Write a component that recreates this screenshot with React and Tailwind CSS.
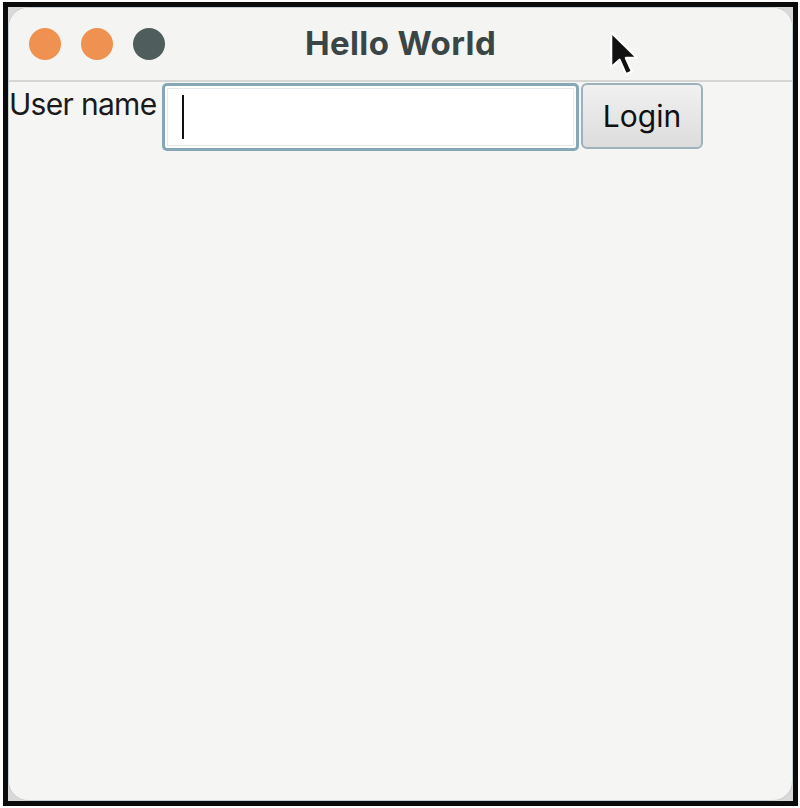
import React from 'react';

function Cursor() {
  return (
    <svg width="40" height="52" viewBox="0 0 17 23" className="absolute left-[599px] top-[22px]">
      <path d="M1.5 1.5 L1.5 17 L5.2 13.6 L8 20 L10.7 18.8 L8 12.8 L13 12.8 Z" fill="#111" stroke="#fff" strokeWidth="1" strokeLinejoin="round" />
    </svg>
  );
}

export default function App() {
  return (
    <div className="w-[800px] h-[808px] bg-white pt-[2px] pl-[3px] font-['Inter','Liberation_Sans',sans-serif]">
      <div className="relative w-[795px] h-[804px] bg-[#111] border-[5px] border-[#0b0b0b] overflow-hidden">
        <div className="w-full h-full bg-[#d9d9d9]">
          <div className="w-full h-full rounded-[20px] bg-[#f5f5f3] flex flex-col overflow-hidden border border-[#c5d0d4]">
            {/* barra de titulo */}
            <div className="h-[74px] shrink-0 flex items-center px-[20px] border-b-2 border-[#d6d6d4] bg-[#f4f4f2] relative">
              <div className="flex gap-[20px]">
                <span className="w-[32px] h-[32px] rounded-full bg-[#ef9150]" />
                <span className="w-[32px] h-[32px] rounded-full bg-[#ef9150]" />
                <span className="w-[32px] h-[32px] rounded-full bg-[#4f5d5d]" />
              </div>
              <div className="absolute inset-0 flex items-center justify-center">
                <span className="text-[33px] font-bold text-[#3a4545] tracking-[0.4px]">Hello World</span>
              </div>
            </div>
            {/* formulario */}
            <div className="flex items-start pt-[1px]">
              <label className="w-[153px] shrink-0 text-[30px] text-[#1a1a1a] leading-[36px] mt-[3px] tracking-[-0.7px] whitespace-nowrap">User name</label>
              <div className="w-[417px] h-[68px] rounded-[5px] border-[3px] border-[#86a8b6] bg-white p-[2px]">
                <div className="w-full h-full border border-[#e3e9ec] flex items-center pl-[14px]">
                  <span className="w-[2px] h-[44px] bg-[#111]" />
                </div>
              </div>
              <button className="ml-[2px] w-[122px] h-[66px] rounded-[6px] border-2 border-[#9fb2bb] bg-gradient-to-b from-[#f1f1f1] to-[#dcdcdc] text-[30px] text-[#111] leading-none">
                Login
              </button>
            </div>
          </div>
        </div>
        <Cursor />
      </div>
    </div>
  );
}
